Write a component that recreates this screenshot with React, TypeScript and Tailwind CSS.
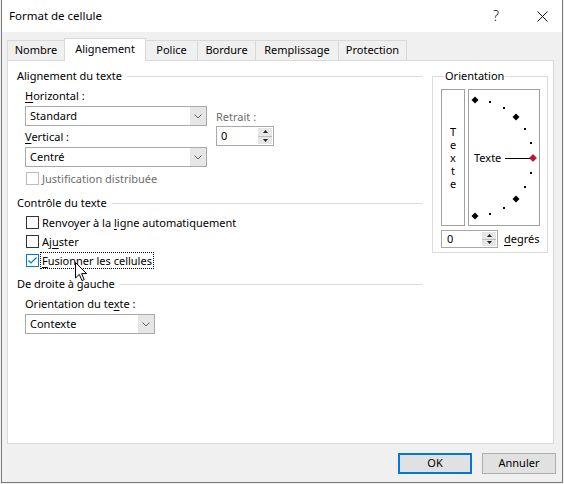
import React from "react";

const U = ({ children }: { children: React.ReactNode }) => (
  <span className="underline decoration-[1px] underline-offset-[2px]">{children}</span>
);

function Chevron() {
  return (
    <svg width="8" height="5" viewBox="0 0 8 5">
      <polyline points="0.5,0.5 4,4 7.5,0.5" fill="none" stroke="#606060" strokeWidth="1" />
    </svg>
  );
}

function Combo({ value, className }: { value: string; className: string }) {
  return (
    <div className={`h-[20px] border border-[#a9a9a9] bg-white flex ${className}`}>
      <span className="flex-1 pl-[4px] leading-[18px]">{value}</span>
      <span className="w-[16px] bg-[#e6e6e6] flex items-center justify-center">
        <Chevron />
      </span>
    </div>
  );
}

function SpinButtons() {
  return (
    <span className="w-[14px] my-[1px] mr-[1px] flex flex-col bg-[#e6e6e6]">
      <span className="flex-1 flex items-center justify-center border-b border-[#bdbdbd]">
        <svg width="5" height="3" viewBox="0 0 5 3">
          <polygon points="0,3 2.5,0 5,3" fill="#222" />
        </svg>
      </span>
      <span className="flex-1 flex items-center justify-center">
        <svg width="5" height="3" viewBox="0 0 5 3">
          <polygon points="0,0 2.5,3 5,0" fill="#222" />
        </svg>
      </span>
    </span>
  );
}

function Spin({ className, pad }: { className: string; pad: string }) {
  return (
    <div className={`border border-[#a9a9a9] bg-white flex ${className}`}>
      <span className={`flex-1 ${pad} flex items-center`}>0</span>
      <SpinButtons />
    </div>
  );
}

function Box({ state }: { state: "normal" | "disabled" | "checked" }) {
  const cls =
    state === "disabled"
      ? "border-[#bcbcbc]"
      : state === "checked"
      ? "border-[#0078d7]"
      : "border-[#333333]";
  return (
    <span className={`ml-[1px] w-[13px] h-[13px] border ${cls} bg-white flex items-center justify-center shrink-0`}>
      {state === "checked" && (
        <svg width="11" height="11" viewBox="0 0 11 11">
          <polyline points="1.5,5.5 4,8 9.5,2.5" fill="none" stroke="#0078d7" strokeWidth="1.2" />
        </svg>
      )}
    </span>
  );
}

function CheckRow({
  state,
  children,
  focus,
  className,
}: {
  state: "normal" | "disabled" | "checked";
  children: React.ReactNode;
  focus?: boolean;
  className: string;
}) {
  return (
    <div className={`flex items-center h-[17px] gap-[1px] ${className}`}>
      <Box state={state} />
      <span
        className={`border px-[1px] leading-[15px] ${focus ? "border-dotted border-black" : "border-transparent"} ${
          state === "disabled" ? "text-[#6d6d6d]" : ""
        }`}
      >
        {children}
      </span>
    </div>
  );
}

function Header({ children, className }: { children: React.ReactNode; className: string }) {
  return (
    <div className={`flex items-center h-[16px] leading-[16px] ${className}`}>
      <span>{children}</span>
      <span className="flex-1 h-px bg-[#dcdcdc] ml-[5px]" />
    </div>
  );
}

function Dial() {
  const angles = [90, 75, 60, 45, 30, 15, 0, -15, -30, -45, -60, -75, -90];
  const cx = 6;
  const cy = 68;
  const r = 58;
  return (
    <div className="relative w-[72px] h-[137px] border border-[#a0a0a0] ml-[3px]">
      <svg width="70" height="135" viewBox="0 0 70 135" className="block">
        {angles.map((a) => {
          const t = (a * Math.PI) / 180;
          const x = cx + r * Math.cos(t);
          const y = cy - r * Math.sin(t);
          if (a === 0) return null;
          if (a % 45 === 0) {
            return (
              <polygon
                key={a}
                points={`${x},${y - 3.5} ${x + 3.5},${y} ${x},${y + 3.5} ${x - 3.5},${y}`}
                fill="#000"
              />
            );
          }
          return <rect key={a} x={Math.round(x) - 1} y={Math.round(y) - 1} width="2" height="2" fill="#000" />;
        })}
        <line x1="36" y1="68.5" x2="61" y2="68.5" stroke="#000" strokeWidth="1" />
        <polygon points="64,64.5 67.5,68 64,71.5 60.5,68" fill="#c8102e" stroke="#7a0a14" strokeWidth="0.6" />
      </svg>
      <span className="absolute left-[5px] top-[60px] leading-[16px]">Texte</span>
    </div>
  );
}

function Cursor() {
  return (
    <svg
      className="absolute left-[75px] top-[262px]"
      width="13"
      height="20"
      viewBox="0 0 13 20"
    >
      <polygon
        points="0.5,0.5 0.5,16 4.3,12.4 7,18.6 9.2,17.6 6.6,11.6 11.6,11.6"
        fill="#fff"
        stroke="#000"
        strokeWidth="1"
        strokeLinejoin="miter"
      />
    </svg>
  );
}

export default function App() {
  const tabs = [
    { label: "Nombre", w: "w-[58px]" },
    { label: "Alignement", w: "w-[82px]", active: true },
    { label: "Police", w: "w-[53px]" },
    { label: "Bordure", w: "w-[59px]" },
    { label: "Remplissage", w: "w-[84px]" },
    { label: "Protection", w: "w-[69px]" },
  ];
  return (
    <div className="relative w-[564px] h-[484px] bg-[#f0f0f0] overflow-hidden text-black text-[11px] [font-family:'Noto_Sans',sans-serif]">
      <div className="ml-[1px] w-[562px] h-[483px] border-l border-r border-b border-[#7a7a7a] flex flex-col">
        {/* title bar */}
        <div className="h-[32px] bg-white flex items-center pl-[7px] pr-[14px] shrink-0">
          <span className="text-[11.5px]">Format de cellule</span>
          <span className="ml-auto text-[14px] leading-none font-light text-[#111]">?</span>
          <svg className="ml-[38px]" width="11" height="11" viewBox="0 0 11 11">
            <path d="M0.5,0.5 L10.5,10.5 M10.5,0.5 L0.5,10.5" stroke="#111" strokeWidth="1" />
          </svg>
        </div>
        {/* tabs */}
        <div className="mt-[6px] h-[22px] flex items-end pl-[5px] shrink-0">
          {tabs.map((t, i) =>
            t.active ? (
              <div
                key={t.label}
                className={`${t.w} h-[23px] -mb-px -ml-px relative z-10 bg-white border-t border-l border-r border-[#d9d9d9] flex items-center justify-center pb-[1px]`}
              >
                {t.label}
              </div>
            ) : (
              <div
                key={t.label}
                className={`${t.w} h-[20px] ${i === 0 ? "" : "-ml-px"} bg-[#f0f0f0] border-t border-l border-r border-[#d9d9d9] flex items-center justify-center`}
              >
                {t.label}
              </div>
            )
          )}
        </div>
        {/* panel */}
        <div className="ml-[5px] w-[547px] h-[384px] bg-white border border-[#d9d9d9] flex pl-[9px] pt-[7px] shrink-0">
          <div className="w-[406px] flex flex-col">
            <Header className="">Alignement du texte</Header>
            <div className="flex pl-[8px]">
              <div className="w-[182px] flex flex-col">
                <div className="mt-[4px] h-[16px] leading-[16px]">
                  <U>H</U>orizontal :
                </div>
                <Combo value="Standard" className="mt-[2px] w-[182px]" />
                <div className="mt-[3px] h-[16px] leading-[16px]">
                  <U>V</U>ertical :
                </div>
                <Combo value="Centré" className="mt-[2px] w-[182px]" />
              </div>
              <div className="ml-[9px] flex flex-col">
                <div className="mt-[25px] h-[16px] leading-[16px] text-[#6d6d6d]">Retrait :</div>
                <Spin className="mt-[1px] w-[58px] h-[20px]" pad="pl-[4px]" />
              </div>
            </div>
            <div className="pl-[8px]">
              <CheckRow state="disabled" className="mt-[3px]">
                Justification distribuée
              </CheckRow>
            </div>
            <Header className="mt-[8px]">Contrôle du texte</Header>
            <div className="pl-[8px] flex flex-col">
              <CheckRow state="normal" className="mt-[3px]">
                Renvoyer à la <U>l</U>igne automatiquement
              </CheckRow>
              <CheckRow state="normal" className="mt-[2px]">
                Aj<U>u</U>ster
              </CheckRow>
              <CheckRow state="checked" focus className="mt-[2px]">
                <U>F</U>usionner les cellules
              </CheckRow>
            </div>
            <Header className="mt-[7px]">De droite à gauche</Header>
            <div className="pl-[8px] flex flex-col">
              <div className="mt-[4px] h-[16px] leading-[16px]">
                Orientation du te<U>x</U>te :
              </div>
              <Combo value="Contexte" className="mt-[2px] w-[130px]" />
            </div>
          </div>
          <fieldset className="ml-[9px] w-[116px] h-[185px] border border-[#dcdcdc] pl-[8px] pt-[5px]">
            <legend className="ml-[3px] px-[1px] leading-[16px]">Orientation</legend>
            <div className="flex">
              <div className="w-[24px] h-[137px] border border-[#a0a0a0] flex flex-col items-center justify-center">
                <span className="h-[13px] leading-[13px]">T</span>
                <span className="h-[13px] leading-[13px]">e</span>
                <span className="h-[13px] leading-[13px]">x</span>
                <span className="h-[13px] leading-[13px]">t</span>
                <span className="h-[13px] leading-[13px]">e</span>
              </div>
              <Dial />
            </div>
            <div className="mt-[4px] flex items-center">
              <Spin className="w-[57px] h-[18px]" pad="pl-[5px]" />
              <span className="ml-[6px]">
                <U>d</U>egrés
              </span>
            </div>
          </fieldset>
        </div>
        {/* buttons */}
        <div className="mt-[9px] flex justify-end gap-[10px] pr-[6px]">
          <div className="w-[74px] h-[21px] border-2 border-[#0078d7] bg-[#e1e1e1] flex items-center justify-center">
            OK
          </div>
          <div className="w-[74px] h-[21px] border border-[#adadad] bg-[#e1e1e1] flex items-center justify-center">
            Annuler
          </div>
        </div>
      </div>
      <Cursor />
    </div>
  );
}
